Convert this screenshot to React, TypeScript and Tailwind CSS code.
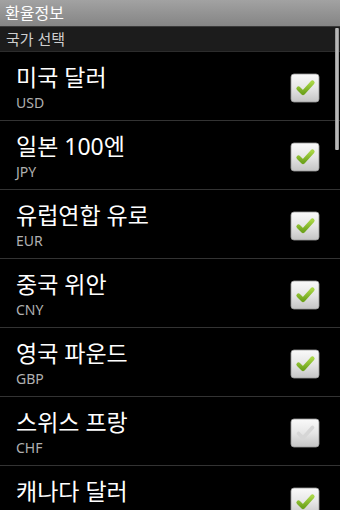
import React from "react";

const items = [
  { name: "미국 달러", code: "USD", checked: true },
  { name: "일본 100엔", code: "JPY", checked: true },
  { name: "유럽연합 유로", code: "EUR", checked: true },
  { name: "중국 위안", code: "CNY", checked: true },
  { name: "영국 파운드", code: "GBP", checked: true },
  { name: "스위스 프랑", code: "CHF", checked: false },
  { name: "캐나다 달러", code: "CAD", checked: true },
];

function CheckBox({ checked, id }: { checked: boolean; id: number }) {
  return (
    <svg width="30" height="30" viewBox="0 0 30 30">
      <defs>
        <linearGradient id={`bg${id}`} x1="0" y1="0" x2="0" y2="1">
          <stop offset="0" stopColor="#fafafa" />
          <stop offset="0.5" stopColor="#e6e6e6" />
          <stop offset="1" stopColor="#c4c4c4" />
        </linearGradient>
        <linearGradient id={`ck${id}`} x1="0" y1="0" x2="0" y2="1">
          <stop offset="0" stopColor="#a8d646" />
          <stop offset="1" stopColor="#6ea31c" />
        </linearGradient>
      </defs>
      <rect x="1" y="1" width="28" height="28" rx="3" fill={`url(#bg${id})`} stroke="#9a9a9a" strokeWidth="0.8" />
      {checked ? (
        <path
          d="M8.5 15.5 L13 20 L22.5 9.5"
          fill="none"
          stroke={`url(#ck${id})`}
          strokeWidth="4.2"
          strokeLinecap="round"
          strokeLinejoin="round"
        />
      ) : (
        <path
          d="M8.5 15.5 L13 20 L22.5 9.5"
          fill="none"
          stroke="#d6d6d6"
          strokeWidth="3.6"
          strokeLinecap="round"
          strokeLinejoin="round"
        />
      )}
    </svg>
  );
}

export default function App() {
  return (
    <div
      className="relative w-[340px] h-[510px] overflow-hidden bg-black"
      style={{ fontFamily: '"Noto Sans", "Noto Sans CJK KR", sans-serif' }}
    >
      <div className="h-[27px] flex items-center px-[5px] bg-gradient-to-b from-[#a2a2a2] to-[#858585] border-b border-[#3a3a3a]">
        <span className="text-[16px] leading-none text-white">환율정보</span>
      </div>
      <div className="h-[25px] flex items-center px-[6px] bg-[#1c1c1c] border-b border-[#2c2c2c]">
        <span className="text-[15px] leading-none text-[#cfcfcf]">국가 선택</span>
      </div>
      <div className="flex flex-col">
        {items.map((it, i) => (
          <div
            key={it.code}
            className="h-[69px] shrink-0 flex items-center border-b border-[#333333] pl-[16px] pr-[20px]"
          >
            <div className="flex-1 flex flex-col gap-[3px]">
              <span className="text-[23px] leading-[30px] text-white">{it.name}</span>
              <span className="text-[14px] leading-[16px] text-[#b0b0b0]">{it.code}</span>
            </div>
            <div className="mt-[3px]">
              <CheckBox checked={it.checked} id={i} />
            </div>
          </div>
        ))}
      </div>
      <div className="absolute left-[335px] top-[28px] w-[4px] h-[122px] rounded-[1px] bg-gradient-to-r from-[#8a8a8a] via-[#c8c8c8] to-[#8a8a8a]" />
    </div>
  );
}
